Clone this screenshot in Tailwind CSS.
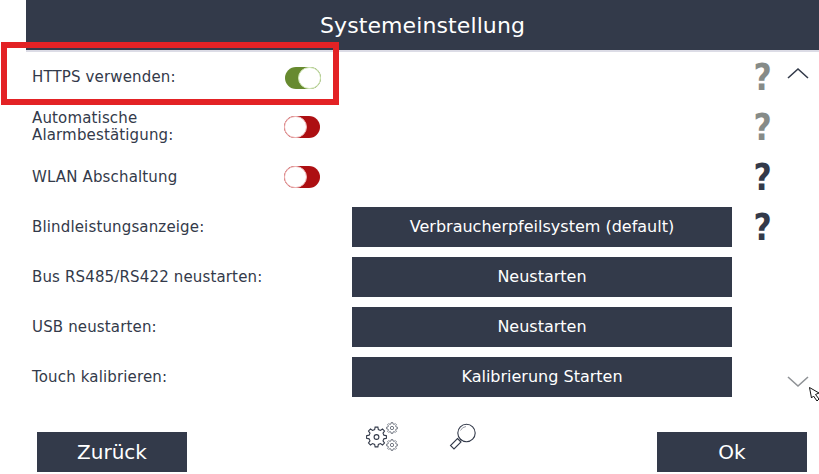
<!DOCTYPE html>
<html lang="de">

<head>
  <meta charset="UTF-8">
  <meta name="viewport" content="width=device-width, initial-scale=1">
  <title>Systemeinstellung</title>
  <script src="https://cdn.jsdelivr.net/npm/@tailwindcss/browser@4"></script>
</head>

<body class="bg-white w-[819px] h-[474px] overflow-hidden relative font-['DejaVu_Sans',sans-serif] text-[#333a4a]">
  <header class="ml-[26px] h-[50px] bg-[#333a4a] text-white text-[22px] tracking-[0.1px] flex items-center justify-center">Systemeinstellung</header>
  <div class="h-[2px] ml-[26px] bg-[#dcdce6]"></div>

  <main class="relative flex">
    <div class="w-[787px] shrink-0">
      <!-- settings rows -->
      <div class="flex items-center h-[50px] pl-[32px]">
        <span class="w-[252px] text-[15px] tracking-[0.15px] leading-[17px]">HTTPS verwenden:</span>
        <div class="ml-[1px] mt-[2px] w-[36px] h-[22px] rounded-full bg-[#678a2f] flex justify-end"><div class="w-[23px] h-[22px] rounded-full bg-white border border-[#cfe6b4]"></div></div>
        <span class="ml-[431px] w-[20px] text-center text-[37px] font-bold leading-none scale-x-[.85] text-[#868b88]">?</span>
      </div>
      <div class="flex items-center h-[50px] pl-[32px]">
        <span class="w-[252px] text-[15px] tracking-[0.15px] leading-[17px]">Automatische<br>Alarmbestätigung:</span>
        <div class="w-[36px] h-[22px] rounded-full bg-[#ad0f12] flex"><div class="w-[23px] h-[22px] rounded-full bg-white border border-[#eeb4b4]"></div></div>
        <span class="ml-[432px] w-[20px] text-center text-[37px] font-bold leading-none scale-x-[.85] text-[#868b88]">?</span>
      </div>
      <div class="flex items-center h-[50px] pl-[32px]">
        <span class="w-[252px] text-[15px] tracking-[0.15px] leading-[17px]">WLAN Abschaltung</span>
        <div class="w-[36px] h-[22px] rounded-full bg-[#ad0f12] flex"><div class="w-[23px] h-[22px] rounded-full bg-white border border-[#eeb4b4]"></div></div>
        <span class="ml-[432px] w-[20px] text-center text-[37px] font-bold leading-none scale-x-[.85]">?</span>
      </div>
      <div class="flex items-center h-[50px] pl-[32px]">
        <span class="w-[320px] text-[15px] tracking-[0.15px]">Blindleistungsanzeige:</span>
        <button class="w-[380px] h-[40px] bg-[#333a4a] text-white text-[16px]">Verbraucherpfeilsystem (default)</button>
        <span class="ml-[20px] w-[20px] text-center text-[37px] font-bold leading-none scale-x-[.85]">?</span>
      </div>
      <div class="flex items-center h-[50px] pl-[32px]">
        <span class="w-[320px] text-[15px] tracking-[0.15px]">Bus RS485/RS422 neustarten:</span>
        <button class="w-[380px] h-[40px] bg-[#333a4a] text-white text-[16px]">Neustarten</button>
      </div>
      <div class="flex items-center h-[50px] pl-[32px]">
        <span class="w-[320px] text-[15px] tracking-[0.15px]">USB neustarten:</span>
        <button class="w-[380px] h-[40px] bg-[#333a4a] text-white text-[16px]">Neustarten</button>
      </div>
      <div class="flex items-center h-[50px] pl-[32px]">
        <span class="w-[320px] text-[15px] tracking-[0.15px]">Touch kalibrieren:</span>
        <button class="w-[380px] h-[40px] bg-[#333a4a] text-white text-[16px]">Kalibrierung Starten</button>
      </div>
    </div>
    <!-- scroll arrows -->
    <div class="w-[22px] h-[350px] flex flex-col justify-between items-center pt-[15px] pb-[14px]">
      <svg class="w-[22px] h-[12px]" viewBox="0 0 22 12" fill="none" stroke="#333a4a" stroke-width="1.6"><path d="M1 11 L11 2 L21 11"/></svg>
      <svg class="w-[22px] h-[12px]" viewBox="0 0 22 12" fill="none" stroke="#8f9296" stroke-width="1.6"><path d="M1 1 L11 10 L21 1"/></svg>
    </div>
  </main>

  <footer class="flex items-start justify-between pl-[37px] pr-[12px] mt-[30px]">
    <button class="w-[150px] h-[40px] bg-[#333a4a] text-white text-[20px]">Zurück</button>
    <div class="flex items-center gap-[49px] -mt-[10px] -ml-[1px]">
      <svg class="w-[34px] h-[30px]" viewBox="0 0 34 30" fill="none" stroke="#333a4a">
        <defs>
          <polygon id="gear" points="1.84,-7.37 1.39,-9.9 -1.39,-9.9 -1.84,-7.37 -3.91,-6.51 -6.02,-7.99 -7.99,-6.02 -6.51,-3.91 -7.37,-1.84 -9.9,-1.39 -9.9,1.39 -7.37,1.84 -6.51,3.91 -7.99,6.02 -6.02,7.99 -3.91,6.51 -1.84,7.37 -1.39,9.9 1.39,9.9 1.84,7.37 3.91,6.51 6.02,7.99 7.99,6.02 6.51,3.91 7.37,1.84 9.9,1.39 9.9,-1.39 7.37,-1.84 6.51,-3.91 7.99,-6.02 6.02,-7.99 3.91,-6.51"/>
        </defs>
        <g transform="translate(10.5 15)" stroke-width="1.1"><use href="#gear"/><circle r="2.4"/></g>
        <g transform="translate(26 6) scale(.55)" stroke-width="1.4" opacity=".85"><use href="#gear"/><circle r="3"/></g>
        <g transform="translate(26 23) scale(.55)" stroke-width="1.4" opacity=".85"><use href="#gear"/><circle r="3"/></g>
      </svg>
      <svg class="w-[28px] h-[28px]" viewBox="0 0 28 28" fill="none" stroke="#333a4a">
        <circle cx="17.5" cy="10" r="8.7" stroke-width="1.1"/>
        <path d="M11.5 7.5 A7 7 0 0 1 17 3.5" stroke="#9a9ea8" stroke-width="1"/>
        <path d="M11 16 L12.5 17.5" stroke-width="1.1"/>
        <polygon points="8.5,15.5 12,19 5,26 1.5,22.5" stroke-width="1.1"/>
      </svg>
    </div>
    <button class="w-[150px] h-[40px] bg-[#333a4a] text-white text-[20px]">Ok</button>
  </footer>

  <!-- mouse pointer -->
  <svg class="absolute left-[809px] top-[387px] w-[11px] h-[15px]" viewBox="0 0 11 15" fill="white" stroke="#111" stroke-width="1"><path d="M0.5 0.5 L10 6 L6.5 7.5 L10 12 L8 14 L4.5 9 L2.5 11 Z"/></svg>
  <!-- red highlight -->
  <div class="absolute left-[1px] top-[42px] w-[338px] h-[63px] border-[6px] border-[#e32225]"></div>
</body>

</html>
